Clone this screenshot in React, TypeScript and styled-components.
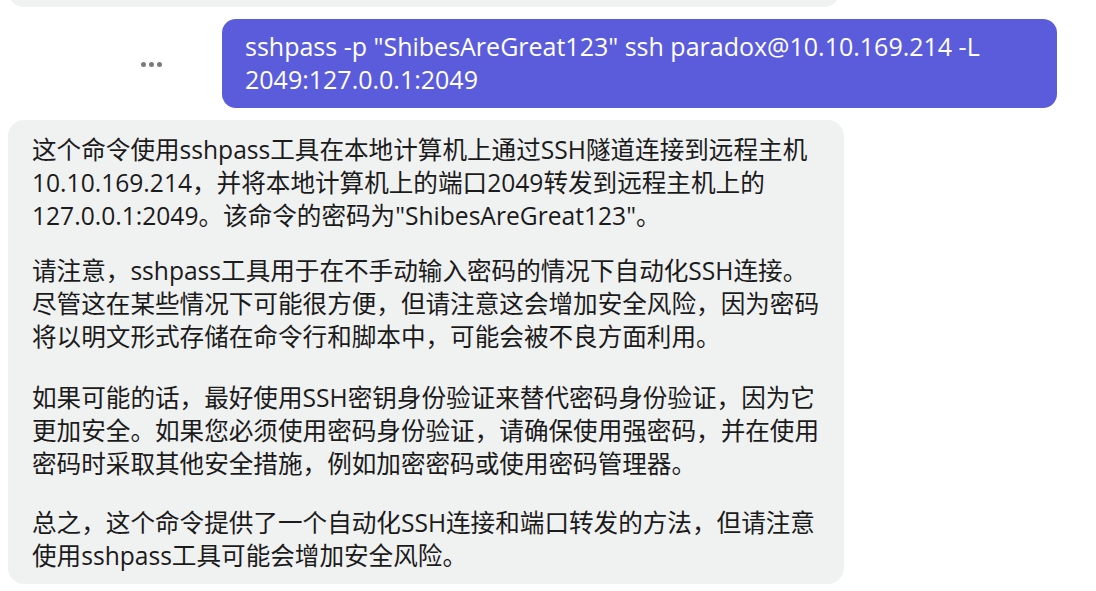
import React from "react";
import styled, { createGlobalStyle } from "styled-components";

const Global = createGlobalStyle`
  html, body { margin: 0; padding: 0; background: #ffffff; }
  body {
    font-family: "Open Sans", "Noto Sans CJK SC", sans-serif;
    overflow: hidden;
    -webkit-font-smoothing: antialiased;
  }
`;

/* The thread is scrolled: the earlier message sits mostly above the viewport */
const Thread = styled.div`
  display: flex;
  flex-direction: column;
  gap: 12px;
  padding: 0 39px 0 8px;
  margin-top: -100px;
`;

const Row = styled.div<{ $mine?: boolean }>`
  display: flex;
  align-items: center;
  justify-content: ${(p) => (p.$mine ? "flex-end" : "flex-start")};
`;

const Bubble = styled.div<{ $mine?: boolean }>`
  box-sizing: border-box;
  max-width: ${(p) => (p.$mine ? "835px" : "836px")};
  width: ${(p) => (p.$mine ? "auto" : "836px")};
  padding: ${(p) => (p.$mine ? "11px 23px 12px 23px" : "13px 6px 12px 24px")};
  border-radius: ${(p) => (p.$mine ? "14px" : "16px")};
  background: ${(p) => (p.$mine ? "#5b5cdc" : "#f0f1f1")};
  color: ${(p) => (p.$mine ? "#ffffff" : "#1b1b1b")};
  font-size: ${(p) => (p.$mine ? "25px" : "24.6px")};
  line-height: 33px;
  word-break: break-word;
`;

const PrevBubble = styled(Bubble)`
  width: 832px;
  height: 107px;
`;

const Para = styled.p<{ $gap?: number }>`
  margin: 0 0 ${(p) => p.$gap ?? 26}px 0;
  &:last-child { margin-bottom: 0; }
`;

const MoreButton = styled.button`
  display: flex;
  align-items: center;
  justify-content: center;
  gap: 3px;
  width: 40px;
  height: 30px;
  margin-right: 51px;
  margin-top: 2px;
  padding: 0;
  border: none;
  background: transparent;
  cursor: pointer;
`;

const Dot = styled.span`
  width: 5px;
  height: 5px;
  border-radius: 50%;
  background: #7b7b7b;
`;

export default function App() {
  return (
    <>
      <Global />
      <Thread>
        <Row>
          <PrevBubble>
            <Para>好的。</Para>
          </PrevBubble>
        </Row>
        <Row $mine>
          <MoreButton aria-label="更多">
            <Dot />
            <Dot />
            <Dot />
          </MoreButton>
          <Bubble $mine>
            sshpass -p "ShibesAreGreat123" ssh paradox@10.10.169.214 -L 2049:127.0.0.1:2049
          </Bubble>
        </Row>
        <Row>
          <Bubble>
            <Para $gap={22}>
              这个命令使用sshpass工具在本地计算机上通过SSH隧道连接到远程主机
              <br />
              10.10.169.214，并将本地计算机上的端口2049转发到远程主机上的
              <br />
              127.0.0.1:2049。该命令的密码为"ShibesAreGreat123"。
            </Para>
            <Para $gap={28}>
              请注意，sshpass工具用于在不手动输入密码的情况下自动化SSH连接。
              <br />
              尽管这在某些情况下可能很方便，但请注意这会增加安全风险，因为密码
              <br />
              将以明文形式存储在命令行和脚本中，可能会被不良方面利用。
            </Para>
            <Para>
              如果可能的话，最好使用SSH密钥身份验证来替代密码身份验证，因为它
              <br />
              更加安全。如果您必须使用密码身份验证，请确保使用强密码，并在使用
              <br />
              密码时采取其他安全措施，例如加密密码或使用密码管理器。
            </Para>
            <Para>
              总之，这个命令提供了一个自动化SSH连接和端口转发的方法，但请注意
              <br />
              使用sshpass工具可能会增加安全风险。
            </Para>
          </Bubble>
        </Row>
      </Thread>
    </>
  );
}
